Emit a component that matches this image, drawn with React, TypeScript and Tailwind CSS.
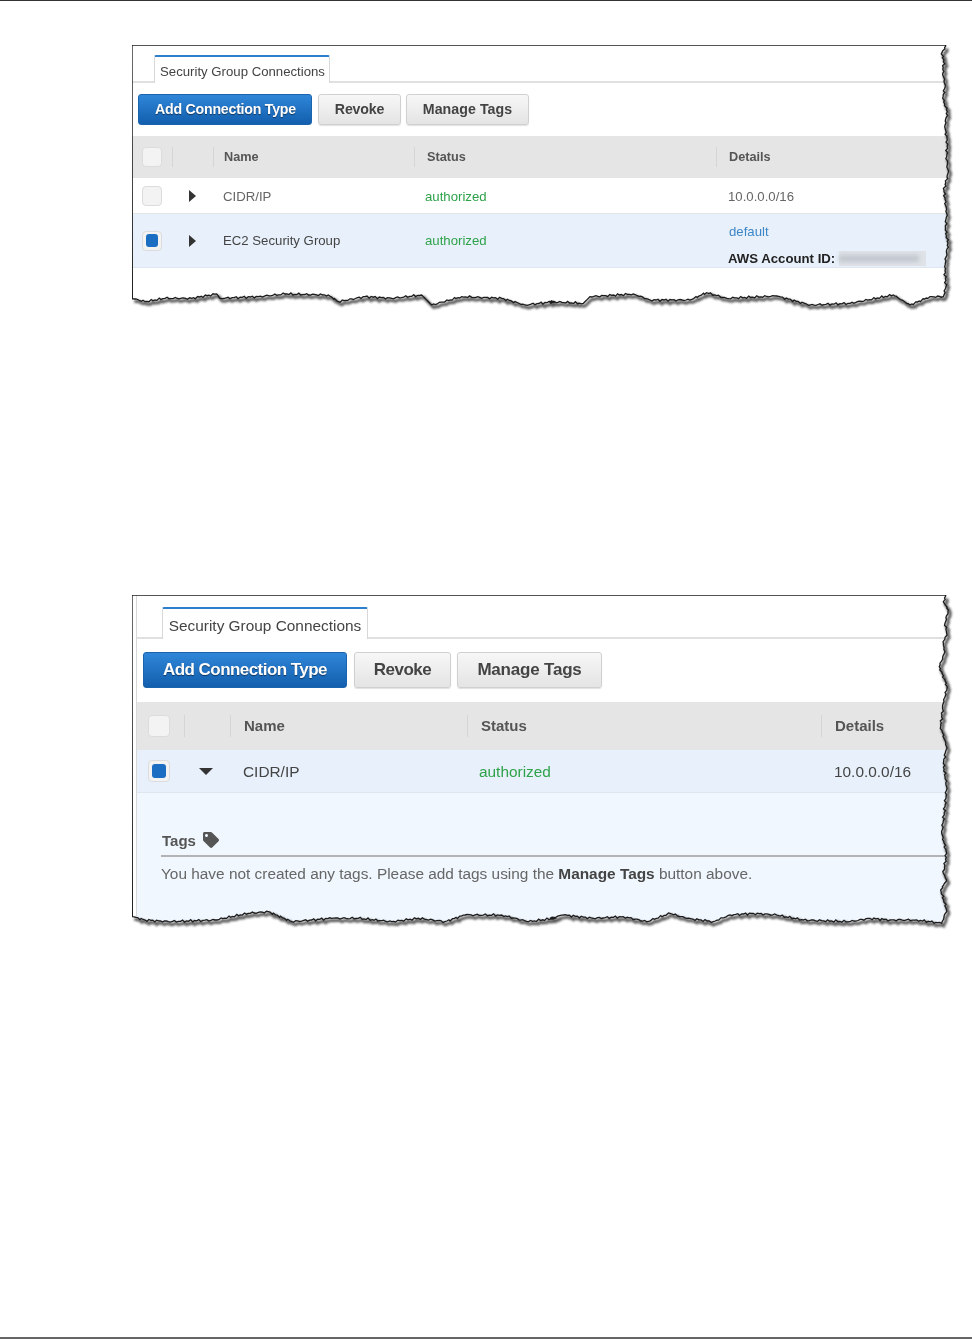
import { FaTag } from "react-icons/fa";

type Pt = [number, number];

// coarse outline of the torn edge, roughened below
function roughen(points: Pt[], seed: number) {
  let d = `M${points[0][0]} ${points[0][1]}`;
  let n = seed;
  for (let i = 1; i < points.length; i++) {
    const [x0, y0] = points[i - 1];
    const [x1, y1] = points[i];
    const len = Math.hypot(x1 - x0, y1 - y0);
    const steps = Math.max(1, Math.round(len / 2));
    for (let s = 1; s <= steps; s++) {
      n++;
      const t = s / steps;
      const j = s === steps ? 0 : Math.sin(n * 2.3) * Math.cos(n * 0.7) * 1.3;
      const nx = (y1 - y0) / (len || 1);
      const ny = (x1 - x0) / (len || 1);
      d += `L${(x0 + (x1 - x0) * t + nx * j).toFixed(1)} ${(y0 + (y1 - y0) * t + ny * j).toFixed(1)}`;
    }
  }
  return d;
}

const z1 = (x: number, y: number): Pt => [125 + x / 3, 40 + y / 3];
const z2 = (x: number, y: number): Pt => [550 + x / 3, 40 + y / 3];
const z3 = (x: number, y: number): Pt => [125 + x / 3, 590 + y / 3];
const z4 = (x: number, y: number): Pt => [550 + x / 3, 590 + y / 3];

const edge1: Pt[] = [
  z2(1187, 18), z2(1174, 42), z2(1182, 60), z2(1178, 100), z2(1186, 135), z2(1178, 175), z2(1192, 215),
  z2(1184, 260), z2(1192, 300), z2(1190, 350), z2(1194, 400), z2(1182, 450), z2(1190, 520), z2(1186, 570),
  z2(1194, 610), z2(1184, 680), z2(1188, 740), z2(1180, 770), z2(1140, 770), z2(1080, 795), z2(1030, 765),
  z2(900, 790), z2(780, 795), z2(680, 768), z2(530, 775), z2(470, 758), z2(420, 780), z2(300, 780),
  z2(250, 762), z2(120, 770), z2(100, 790), z2(0, 785),
  z1(1290, 785), z1(1200, 795), z1(1130, 775), z1(1010, 770), z1(920, 795), z1(890, 765), z1(800, 775),
  z1(720, 770), z1(640, 785), z1(610, 765), z1(480, 762), z1(400, 770), z1(285, 775), z1(275, 762),
  z1(200, 775), z1(120, 775), z1(60, 785), z1(22, 775),
];

const edge2: Pt[] = [
  z4(1187, 18), z4(1180, 35), z4(1195, 60), z4(1185, 100), z4(1190, 130), z4(1180, 160), z4(1185, 185),
  z4(1168, 230), z4(1192, 290), z4(1180, 340), z4(1172, 410), z4(1190, 470), z4(1180, 520), z4(1190, 590),
  z4(1185, 650), z4(1175, 730), z4(1190, 790), z4(1180, 850), z4(1190, 870), z4(1172, 900), z4(1190, 960),
  z4(1175, 1000), z4(1100, 990), z4(1020, 990), z4(960, 985), z4(900, 995), z4(760, 990), z4(680, 975),
  z4(610, 970), z4(540, 975), z4(490, 995), z4(410, 985), z4(360, 970), z4(290, 995), z4(220, 980),
  z4(130, 985), z4(40, 975), z4(0, 985),
  z3(1290, 985), z3(1210, 995), z3(1130, 975), z3(1020, 975), z3(960, 995), z3(880, 985), z3(800, 995),
  z3(700, 985), z3(620, 985), z3(500, 995), z3(430, 965), z3(370, 970), z3(270, 990), z3(130, 995),
  z3(60, 990), z3(22, 980),
];

function TornFrame({ edge, seed, id, top, bottom }: { edge: Pt[]; seed: number; id: string; top: number; bottom: number }) {
  const open = roughen(edge, seed);
  const last = edge[edge.length - 1];
  const closed = `M132 ${top}L945.7 ${top}${open.replace(/^M[^L]*/, "L" + edge[0][0] + " " + edge[0][1])}L${last[0]} ${last[1]}Z`;
  const h = bottom - top;
  return (
    <svg
      className="pointer-events-none absolute inset-0"
      width={826}
      height={h}
      viewBox={`132 ${top} 826 ${h}`}
      aria-hidden
    >
      <defs>
        <filter id={id} x="-5%" y="-5%" width="110%" height="110%">
          <feGaussianBlur stdDeviation="1.1" />
        </filter>
      </defs>
      <path d={`M132 ${top - 1}H958V${bottom}H132Z ${closed}`} fill="#fff" fillRule="evenodd" />
      <path d={open} transform="translate(2 2.5)" fill="none" stroke="#333" strokeWidth="3" filter={`url(#${id})`} opacity="0.8" />
      <path d={closed} fill="none" stroke="#1c1c1c" strokeWidth="1.3" />
    </svg>
  );
}

function Check({ on, cls }: { on?: boolean; cls: string }) {
  return (
    <span className={`flex shrink-0 items-center justify-center rounded-[4px] border border-[#dcdcdc] bg-[#f3f3f3] ${cls}`}>
      {on && <span className="h-[72%] w-[72%] rounded-[3px] bg-[#1b6ec2]" />}
    </span>
  );
}

const btnBlue =
  "rounded-[3px] border border-[#1a64ad] bg-gradient-to-b from-[#2f86d8] to-[#125fae] font-bold text-white [text-shadow:0_1px_1px_rgba(0,0,0,0.5)]";
const btnGray =
  "rounded-[3px] border border-[#d0d0d0] bg-gradient-to-b from-[#f7f7f7] to-[#e4e4e4] font-bold text-[#444] shadow-[0_1px_1px_rgba(0,0,0,0.12)]";

function FigureOne() {
  return (
    <div className="relative h-[270px] w-[826px]">
      <div className="h-full w-[818px] pt-[10px] font-['Liberation_Sans',Arial,sans-serif] text-[13.2px] [filter:blur(0.45px)]">
        <div className="h-[28px] border-b-2 border-[#e0e0e0] pl-[22px]">
          <div className="flex h-[28px] w-[176px] items-center justify-center rounded-t-[2px] border border-b-0 border-[#d8d8d8] border-t-2 border-t-[#2f7fcf] bg-white pl-[1px] pt-[3px] text-[13.2px] text-[#444]">
            Security Group Connections
          </div>
        </div>
        <div className="flex h-[53px] items-center gap-[5px] pl-[6px] text-[14.2px]">
          <button className={`h-[31px] w-[174px] pl-[1px] tracking-[-0.25px] ${btnBlue}`}>Add Connection Type</button>
          <button className={`ml-[1px] h-[31px] w-[83px] tracking-[-0.2px] ${btnGray}`}>Revoke</button>
          <button className={`h-[31px] w-[123px] tracking-[0.05px] ${btnGray}`}>Manage Tags</button>
        </div>
        <div className="flex h-[42px] items-center bg-[#e5e5e5] text-[12.7px] font-bold text-[#555]">
          <div className="flex w-[40px] items-center pl-[10px]">
            <Check cls="h-[20px] w-[20px]" />
          </div>
          <div className="h-[20px] w-[41px] border-l border-[#d5d5d5]" />
          <div className="flex h-[20px] w-[201px] items-center border-l border-[#d5d5d5] pl-[10px] pt-[2px]">Name</div>
          <div className="flex h-[20px] w-[302px] items-center border-l border-[#d5d5d5] pl-[12px] pt-[2px]">Status</div>
          <div className="flex h-[20px] flex-1 items-center border-l border-[#d5d5d5] pl-[12px] pt-[2px]">Details</div>
        </div>
        <div className="flex h-[36px] items-center border-b border-[#e4e4e4] bg-white text-[#666]">
          <div className="flex w-[40px] items-center pl-[10px]">
            <Check cls="h-[20px] w-[20px]" />
          </div>
          <div className="flex w-[41px] justify-center">
            <span className="h-0 w-0 border-y-[6px] border-l-[7px] border-y-transparent border-l-[#333]" />
          </div>
          <div className="w-[202px] pl-[10px] pt-[2px]">CIDR/IP</div>
          <div className="w-[302px] pl-[10px] pt-[2px] text-[#2ea24a]">authorized</div>
          <div className="flex-1 pl-[11px] pt-[2px]">10.0.0.0/16</div>
        </div>
        <div className="flex h-[54px] items-center border-b border-[#dfe6ee] bg-[#e8f1fb] text-[#444]">
          <div className="flex w-[40px] items-center pl-[10px]">
            <Check on cls="h-[20px] w-[20px]" />
          </div>
          <div className="flex w-[41px] justify-center">
            <span className="h-0 w-0 border-y-[6px] border-l-[7px] border-y-transparent border-l-[#333]" />
          </div>
          <div className="w-[202px] pl-[10px]">EC2 Security Group</div>
          <div className="w-[302px] pl-[10px] text-[#2ea24a]">authorized</div>
          <div className="flex-1 pl-[11px] pt-[9px]">
            <div className="pl-[1px] text-[#3d86c6]">default</div>
            <div className="mt-[7px] flex items-center gap-[4px] font-bold text-[#222]">
              AWS Account ID:
              <span className="h-[15px] w-[87px] bg-[#dfe3e8]">
                <span className="mt-[4px] block h-[7px] w-[80px] bg-[#c2c8cf] blur-[2px]" />
              </span>
            </div>
          </div>
        </div>
      </div>
      <TornFrame edge={edge1} seed={3} id="shadowOne" top={45} bottom={315} />
    </div>
  );
}

function FigureTwo() {
  return (
    <div className="relative mt-[280px] h-[345px] w-[826px]">
      <div className="ml-[4px] h-full w-[814px] border-l border-[#d8d8d8] pt-[12px] font-['Liberation_Sans',Arial,sans-serif] text-[15.4px] [filter:blur(0.45px)]">
        <div className="h-[32px] border-b-2 border-[#e0e0e0] pl-[25px]">
          <div className="flex h-[32px] w-[206px] items-center justify-center rounded-t-[2px] border border-b-0 border-[#d8d8d8] border-t-2 border-t-[#2f7fcf] bg-white pt-[3px] text-[15.4px] text-[#444]">
            Security Group Connections
          </div>
        </div>
        <div className="flex h-[63px] items-center gap-[6px] pb-[1px] pl-[6px] text-[17px]">
          <button className={`h-[36px] w-[204px] tracking-[-0.55px] ${btnBlue}`}>Add Connection Type</button>
          <button className={`ml-[1px] h-[36px] w-[97px] tracking-[-0.5px] ${btnGray}`}>Revoke</button>
          <button className={`h-[36px] w-[145px] tracking-[-0.2px] ${btnGray}`}>Manage Tags</button>
        </div>
        <div className="flex h-[48px] items-center bg-[#e5e5e5] text-[15px] font-bold text-[#555]">
          <div className="flex w-[47px] items-center pl-[11px]">
            <Check cls="h-[22px] w-[22px]" />
          </div>
          <div className="h-[22px] w-[46px] border-l border-[#d5d5d5]" />
          <div className="flex h-[22px] w-[237px] items-center border-l border-[#d5d5d5] pl-[13px]">Name</div>
          <div className="flex h-[22px] w-[354px] items-center border-l border-[#d5d5d5] pl-[13px]">Status</div>
          <div className="flex h-[22px] flex-1 items-center border-l border-[#d5d5d5] pl-[13px]">Details</div>
        </div>
        <div className="flex h-[43px] items-center border-b border-[#dfe6ee] bg-[#e8f1fb] text-[#444]">
          <div className="flex w-[47px] items-center pl-[11px]">
            <Check on cls="h-[22px] w-[22px]" />
          </div>
          <div className="flex w-[46px] justify-center pr-[2px]">
            <span className="h-0 w-0 border-x-[7px] border-t-[7px] border-x-transparent border-t-[#333]" />
          </div>
          <div className="w-[236px] pl-[13px] pt-[2px]">CIDR/IP</div>
          <div className="w-[355px] pl-[13px] pt-[2px] text-[#2ea24a]">authorized</div>
          <div className="flex-1 pl-[13px] pt-[2px]">10.0.0.0/16</div>
        </div>
        <div className="h-[140px] bg-[#f0f7fe] pl-[24px] pt-[37px]">
          <div className="flex h-[27px] items-center gap-[7px] border-b-2 border-[#b4b4b4] pb-[2px] pl-[1px] text-[15px] font-bold text-[#555]">
            Tags
            <FaTag className="mb-[3px] h-[16px] w-[16px] text-[#555]" />
          </div>
          <p className="mt-[5px] text-[#666]">
            You have not created any tags. Please add tags using the <b className="text-[#444]">Manage Tags</b> button above.
          </p>
        </div>
      </div>
      <TornFrame edge={edge2} seed={11} id="shadowTwo" top={595} bottom={940} />
    </div>
  );
}

export default function App() {
  return (
    <div className="flex h-[1339px] w-[972px] flex-col justify-between overflow-hidden bg-white">
      <div className="h-[1px] bg-[#333]" />
      <div className="flex-1 pl-[132px] pt-[44px]">
        <FigureOne />
        <FigureTwo />
      </div>
      <div className="h-[2px] bg-[#666]" />
    </div>
  );
}
